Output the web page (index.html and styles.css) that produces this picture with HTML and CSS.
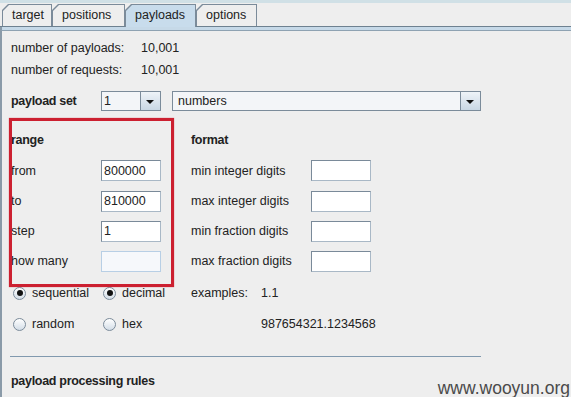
FILE: index.html
```html
<!DOCTYPE html>
<html lang="en">
<head>
    <meta charset="UTF-8">
    <title>payloads</title>
    <link rel="stylesheet" href="styles.css">
</head>
<body>

    <div class="window">
        <div class="topline"></div>

        <div class="tabs">
            <div class="tab t-target"><span>target</span></div>
            <div class="tab t-positions"><span>positions</span></div>
            <div class="tab t-payloads selected"><span>payloads</span></div>
            <div class="tab t-options"><span>options</span></div>
        </div>
        <div class="tabline"></div>

        <div class="panel">
            <div class="stats">
                <span>number of payloads:</span><span>10,001</span>
                <span>number of requests:</span><span>10,001</span>
            </div>

            <div class="setrow">
                <span class="bold">payload set</span>
                <div class="combo small"><span class="val">1</span><span class="arrow"></span></div>
                <div class="combo wide"><span class="val">numbers</span><span class="arrow"></span></div>
            </div>

            <div class="grid">
                <span class="bold">range</span>
                <span></span>
                <span class="bold span2">format</span>
                <span></span>

                <span>from</span>
                <input class="field" value="800000">
                <span class="span2">min integer digits</span>
                <input class="field">

                <span>to</span>
                <input class="field" value="810000">
                <span class="span2">max integer digits</span>
                <input class="field">

                <span>step</span>
                <input class="field" value="1">
                <span class="span2">min fraction digits</span>
                <input class="field">

                <span>how many</span>
                <input class="field" disabled>
                <span class="span2">max fraction digits</span>
                <input class="field">

                <label class="radio"><span class="dot on"></span>sequential</label>
                <label class="radio"><span class="dot on"></span>decimal</label>
                <span>examples:</span>
                <span class="span2">1.1</span>

                <label class="radio"><span class="dot"></span>random</label>
                <label class="radio"><span class="dot"></span>hex</label>
                <span></span>
                <span class="span2 nowrap">987654321.1234568</span>
            </div>

            <div class="sep"></div>
            <div class="heading bold">payload processing rules</div>

            <div class="mark"></div>
        </div>

        <div class="watermark">www.wooyun.org</div>
    </div>

</body>
</html>
```

FILE: styles.css
```css
body {
    margin: 0;
    background-color: #eeeeee;
    color: #222222;
    font-family: "Liberation Sans", Arial, sans-serif;
    font-size: 12.5px;
    overflow: hidden;
}

.window {
    position: relative;
    width: 571px;
    height: 397px;
    overflow: hidden;
}

.topline {
    height: 3px;
    background: #d0e0e6;
}

.tabs {
    display: flex;
    align-items: flex-end;
    height: 22px;
    margin-top: 1px;
    padding-left: 2px;
    border-bottom: 1px solid #6e8190;
}

.tab {
    height: 22px;
    box-sizing: border-box;
    padding: 1px 1px 0 1px;
    background: #7b8b9a;
    clip-path: polygon(0 6px, 6px 0, 100% 0, 100% 100%, 0 100%);
}

.t-target { width: 50px; }
.t-positions { width: 73px; }
.t-payloads { width: 71px; }
.t-options { width: 61px; }

.tab span {
    display: block;
    height: 21px;
    line-height: 21px;
    padding-left: 9px;
    background: #eeeeee;
    clip-path: polygon(0 6px, 6px 0, 100% 0, 100% 100%, 0 100%);
}

.tab.selected {
    height: 23px;
    margin-bottom: -1px;
}

.tab.selected span {
    height: 22px;
    background: #c8dcec;
}

.tabline {
    height: 3px;
    background: #c6d9e8;
    border-bottom: 1px solid #8ea2b2;
    border-left: 2px solid #8a9aa8;
}

.panel {
    position: relative;
    height: 366px;
    padding: 6px 0 0 9px;
    border-left: 2px solid #8a9aa8;
}

.bold {
    font-weight: bold;
    letter-spacing: -0.3px;
}

.stats {
    display: grid;
    grid-template-columns: 130px auto;
    grid-auto-rows: 22px;
    align-items: center;
}

.setrow {
    display: flex;
    align-items: center;
    height: 20px;
    margin-top: 10px;
}

.setrow .bold {
    width: 90px;
}

.combo {
    display: flex;
    height: 20px;
    box-sizing: border-box;
    border: 1px solid #7b8b9a;
    background: #f3f5f8;
}

.combo.small {
    width: 60px;
}

.combo.wide {
    width: 309px;
    margin-left: 11px;
}

.combo .val {
    flex: 1;
    line-height: 18px;
    padding-left: 5px;
}

.combo.small .val {
    padding-left: 2px;
}

.combo .arrow {
    position: relative;
    width: 19px;
    border-left: 1px solid #7b8b9a;
    background: linear-gradient(#eef3f8, #c9d7e4);
}

.combo .arrow::after {
    content: "";
    position: absolute;
    left: 5px;
    top: 8px;
    border-left: 4px solid transparent;
    border-right: 4px solid transparent;
    border-top: 4px solid #111111;
}

.grid {
    display: grid;
    grid-template-columns: 90px 90px 70px 50px 60px;
    grid-template-rows: 30px 31px 30px 30px 30px 34px 28px;
    align-items: center;
    margin-top: 14px;
}

.span2 {
    grid-column: span 2;
}

.nowrap {
    white-space: nowrap;
}

.field {
    width: 60px;
    height: 21px;
    box-sizing: border-box;
    margin: 0;
    padding: 0 2px;
    border: 1px solid;
    border-color: #7a8a99 #a9b8c6 #a9b8c6 #7a8a99;
    background: #ffffff;
    font: inherit;
    color: #222222;
    outline: none;
}

.field:disabled {
    border-color: #b8cfe5;
    background: #f6f8fb;
}

.radio {
    display: flex;
    align-items: center;
    gap: 6px;
    margin-left: 2px;
}

.dot {
    position: relative;
    width: 13px;
    height: 13px;
    box-sizing: border-box;
    border: 1px solid #7b8b9a;
    border-radius: 50%;
    background: linear-gradient(#ffffff, #d3dde7);
}

.dot.on::after {
    content: "";
    position: absolute;
    left: 2.5px;
    top: 2.5px;
    width: 6px;
    height: 6px;
    border-radius: 50%;
    background: #111111;
}

.sep {
    width: 471px;
    height: 1px;
    margin: 18px 0 0 -1px;
    background: #8199ae;
}

.heading {
    line-height: 22px;
    margin-top: 13px;
}

/* red annotation box drawn over the range block */
.mark {
    position: absolute;
    left: 7px;
    top: 87px;
    width: 159px;
    height: 163px;
    border: 3px solid #cc2030;
    box-shadow: 0 0 1px rgba(204, 32, 48, 0.7);
}

.watermark {
    position: absolute;
    right: 1px;
    bottom: -1px;
    font-size: 17.5px;
    line-height: 20px;
    color: #4a4a4a;
}
```
